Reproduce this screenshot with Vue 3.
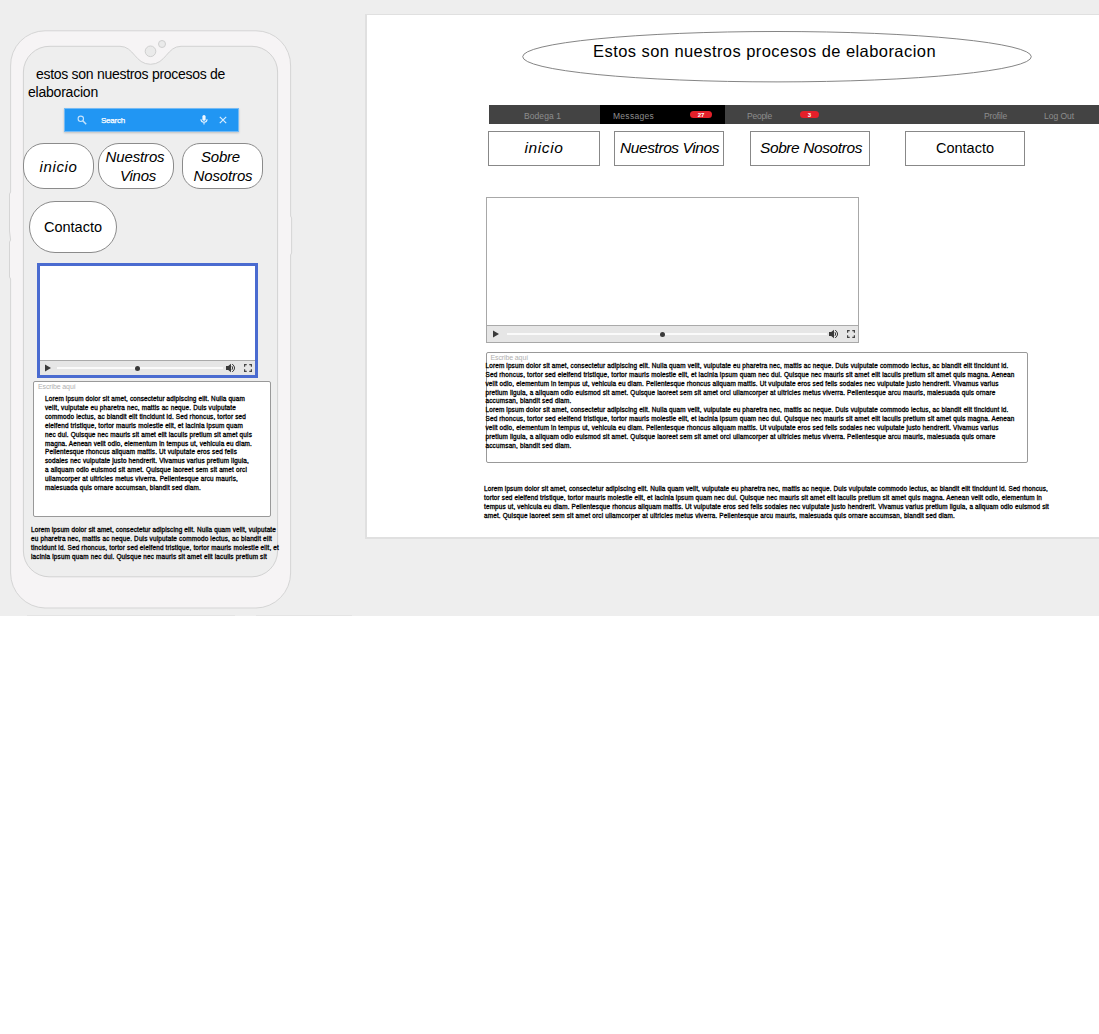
<script setup>
import { h } from 'vue'

// Spreads the letters of a line so that it takes up the given width.
const vFit = {
  mounted(el, { value }) {
    const width = el.getBoundingClientRect().width
    el.style.letterSpacing = (value - width) / el.textContent.length + 'px'
  }
}

const noteLines = [
  ['Lorem ipsum dolor sit amet, consectetur adipiscing elit. Nulla quam', 200],
  ['velit, vulputate eu pharetra nec, mattis ac neque. Duis vulputate', 191],
  ['commodo lectus, ac blandit elit tincidunt id. Sed rhoncus, tortor sed', 201],
  ['eleifend tristique, tortor mauris molestie elit, et lacinia ipsum quam', 198],
  ['nec dui. Quisque nec mauris sit amet elit iaculis pretium sit amet quis', 207],
  ['magna. Aenean velit odio, elementum in tempus ut, vehicula eu diam.', 207],
  ['Pellentesque rhoncus aliquam mattis. Ut vulputate eros sed felis', 192],
  ['sodales nec vulputate justo hendrerit. Vivamus varius pretium ligula,', 204],
  ['a aliquam odio euismod sit amet. Quisque laoreet sem sit amet orci', 202],
  ['ullamcorper at ultricies metus viverra. Pellentesque arcu mauris,', 193],
  ['malesuada quis ornare accumsan, blandit sed diam.', 156]
]

const phoneFooter = [
  ['Lorem ipsum dolor sit amet, consectetur adipiscing elit. Nulla quam velit, vulputate', 245],
  ['eu pharetra nec, mattis ac neque. Duis vulputate commodo lectus, ac blandit elit', 241],
  ['tincidunt id. Sed rhoncus, tortor sed eleifend tristique, tortor mauris molestie elit, et', 248],
  ['lacinia ipsum quam nec dui. Quisque nec mauris sit amet elit iaculis pretium sit', 236]
]

const article = [
  ['Lorem ipsum dolor sit amet, consectetur adipiscing elit. Nulla quam velit, vulputate eu pharetra nec, mattis ac neque. Duis vulputate commodo lectus, ac blandit elit tincidunt id.', 523],
  ['Sed rhoncus, tortor sed eleifend tristique, tortor mauris molestie elit, et lacinia ipsum quam nec dui. Quisque nec mauris sit amet elit iaculis pretium sit amet quis magna. Aenean', 529],
  ['velit odio, elementum in tempus ut, vehicula eu diam. Pellentesque rhoncus aliquam mattis. Ut vulputate eros sed felis sodales nec vulputate justo hendrerit. Vivamus varius', 513],
  ['pretium ligula, a aliquam odio euismod sit amet. Quisque laoreet sem sit amet orci ullamcorper at ultricies metus viverra. Pellentesque arcu mauris, malesuada quis ornare', 510],
  ['accumsan, blandit sed diam.', 86]
]
const articleLines = [...article, ...article]

const pageFooter = [
  ['Lorem ipsum dolor sit amet, consectetur adipiscing elit. Nulla quam velit, vulputate eu pharetra nec, mattis ac neque. Duis vulputate commodo lectus, ac blandit elit tincidunt id. Sed rhoncus,', 564],
  ['tortor sed eleifend tristique, tortor mauris molestie elit, et lacinia ipsum quam nec dui. Quisque nec mauris sit amet elit iaculis pretium sit amet quis magna. Aenean velit odio, elementum in', 558],
  ['tempus ut, vehicula eu diam. Pellentesque rhoncus aliquam mattis. Ut vulputate eros sed felis sodales nec vulputate justo hendrerit. Vivamus varius pretium ligula, a aliquam odio euismod sit', 565],
  ['amet. Quisque laoreet sem sit amet orci ullamcorper at ultricies metus viverra. Pellentesque arcu mauris, malesuada quis ornare accumsan, blandit sed diam.', 471]
]

const PlayIcon = () =>
  h('svg', { viewBox: '0 0 6 8', width: 6, height: 8 }, [h('path', { d: 'M0 .5 6 4 0 7.5z', fill: '#3a3a3a' })])

const SoundIcon = () =>
  h('svg', { viewBox: '0 0 10 10', width: 10, height: 10 }, [
    h('path', { d: 'M0 3h2.2L5 .7v8.6L2.2 7H0z', fill: '#3a3a3a' }),
    h('path', { d: 'M6 3.2q1.3 1.8 0 3.6M6.2 1q4.8 4 0 8', fill: 'none', stroke: '#3a3a3a', 'stroke-width': 1 })
  ])

const FullIcon = () =>
  h('svg', { viewBox: '0 0 8 8', width: 8, height: 8 }, [
    h('path', { d: 'M.6 2.7V.6h2.1M5.3.6h2.1v2.1M7.4 5.3v2.1H5.3M2.7 7.4H.6V5.3', fill: 'none', stroke: '#444', 'stroke-width': 1.2 })
  ])
</script>

<template>
  <main class="canvas">
    <section class="phone">
      <svg class="shell" width="300" height="616" viewBox="0 0 300 616">
        <path d="M45 30.8H256A34.5 34.5 0 0 1 290.6 66V216L291.6 218V253L290.6 255V573A35 35 0 0 1 256 608H45A35 35 0 0 1 10.6 573V279L9.5 277V242L10.6 240L9.5 231V194L10.6 192V66A34.5 34.5 0 0 1 45 30.8Z" fill="#f6f4f5" stroke="#d5d5d5" />
        <path d="M50 46.3H120C134 46.3 135 64.3 150.5 64.3S167 46.3 181 46.3H252A25.8 25.8 0 0 1 277.6 72V551A25.8 25.8 0 0 1 252 576.8H49A25.8 25.8 0 0 1 23.4 551V72A26 26 0 0 1 50 46.3Z" fill="#eeeeee" stroke="#d2d2d2" />
        <circle cx="150.5" cy="51.3" r="5.3" fill="#eaeaea" stroke="#cfcfcf" />
        <circle cx="162" cy="44" r="3.5" fill="#eaeaea" stroke="#cfcfcf" />
        <path d="M27 615.5H235M256 615.5H352" stroke="#e4e4e4" />
      </svg>
      <div class="screen">
        <h2 class="phone-title">
          <span class="first"><span v-fit="189">estos son nuestros procesos de</span></span>
          <span><span v-fit="70">elaboracion</span></span>
        </h2>
        <div class="search">
          <svg width="10" height="10" viewBox="0 0 10 10" fill="none" stroke="#c5e3fc"><circle cx="3.8" cy="3.8" r="2.7" stroke-width="1.1" /><path d="m5.8 5.8 3.4 3.4" stroke-width="1.5" /></svg>
          <span class="search-label"><span v-fit="24">Search</span></span>
          <svg class="mic" width="8" height="10" viewBox="0 0 8 10"><rect x="2.4" y="0" width="3.2" height="5.8" rx="1.6" fill="#f0f8ff" /><path d="M.9 4.2q.2 3 3.1 3t3.1-3M4 7v2.6" fill="none" stroke="#e2f1fe" stroke-width="1.1" /></svg>
          <svg width="8" height="8" viewBox="0 0 8 8"><path d="m.8.8 6.4 6.4m0-6.4L.8 7.2" stroke="#d9edfd" stroke-width="1.2" /></svg>
        </div>
        <nav class="pills">
          <a class="pill p1"><span v-fit="38">inicio</span></a>
          <a class="pill p2"><span v-fit="59">Nuestros</span><span v-fit="36" class="vinos">Vinos</span></a>
          <a class="pill p3"><span v-fit="39" class="sobre">Sobre</span><span v-fit="59">Nosotros</span></a>
          <a class="pill p4"><span v-fit="58">Contacto</span></a>
        </nav>
        <div class="player small">
          <div class="controls"><PlayIcon /><div class="track"><i></i></div><SoundIcon /><FullIcon class="full" /></div>
        </div>
        <div class="note">
          <div class="hint"><span v-fit="37.5">Escribe aquí</span></div>
          <p v-for="(l, i) in noteLines" :key="i" class="lorem"><span v-fit="l[1]">{{ l[0] }}</span></p>
        </div>
        <div class="phone-footer">
          <p v-for="(l, i) in phoneFooter" :key="i" class="lorem"><span v-fit="l[1]">{{ l[0] }}</span></p>
        </div>
      </div>
    </section>

    <section class="desktop">
      <h1 class="oval">
        <svg width="510" height="52" viewBox="0 0 510 52"><ellipse cx="255" cy="25.7" rx="254.3" ry="25.2" fill="#fff" stroke="#777" stroke-width=".9" /></svg>
        <span v-fit="343">Estos son nuestros procesos de elaboracion</span>
      </h1>
      <div class="menu">
        <div class="tab t1"><span v-fit="37">Bodega 1</span></div>
        <div class="tab t2"><span v-fit="41">Messages</span><b>27</b></div>
        <div class="tab t3"><span v-fit="25">People</span><b>3</b></div>
        <div class="tab t4"><span v-fit="23">Profile</span></div>
        <div class="tab t5"><span v-fit="30">Log Out</span></div>
      </div>
      <nav class="links">
        <a class="link l1"><span v-fit="39">inicio</span></a>
        <a class="link l2"><span v-fit="99">Nuestros Vinos</span></a>
        <a class="link l3"><span v-fit="102">Sobre Nosotros</span></a>
        <a class="link l4"><span v-fit="58">Contacto</span></a>
      </nav>
      <div class="player large">
        <div class="controls"><PlayIcon /><div class="track"><i></i></div><SoundIcon /><FullIcon class="full" /></div>
      </div>
      <div class="article">
        <div class="hint"><span v-fit="37.5">Escribe aquí</span></div>
        <p v-for="(l, i) in articleLines" :key="i" class="lorem"><span v-fit="l[1]">{{ l[0] }}</span></p>
      </div>
      <div class="page-footer">
        <p v-for="(l, i) in pageFooter" :key="i" class="lorem"><span v-fit="l[1]">{{ l[0] }}</span></p>
      </div>
    </section>
  </main>
</template>

<style>
body { margin: 0; background: #fff; }
</style>

<style scoped>
* { box-sizing: border-box; }
.canvas {
  display: flex;
  width: 1099px;
  height: 616px;
  overflow: hidden;
  background: #eee;
  color: #000;
  font-family: "Liberation Sans", Arial, sans-serif;
}
span { white-space: nowrap; }
svg { display: block; flex: none; }
h1, h2, p { margin: 0; font-weight: 400; }

.phone { position: relative; width: 365px; flex: none; }
.shell { position: absolute; left: 0; top: 0; overflow: visible; }
.screen { position: relative; padding: 65px 0 0 23px; display: flex; flex-direction: column; align-items: flex-start; }
.phone-title { font-size: 14px; line-height: 18px; padding-left: 5px; height: 43px; }
.phone-title > span { display: block; }
.phone-title .first { padding-left: 8px; }
.search {
  display: flex;
  align-items: center;
  width: 175px;
  height: 24px;
  margin-left: 41px;
  padding: 0 11px 0 12px;
  border: 1px solid #75bbf5;
  background: #2196f3;
  box-shadow: 0 1px 2px rgba(0, 0, 0, .2);
}
.search-label { margin-left: 14px; flex: 1; color: #fff; font-size: 8px; -webkit-text-stroke: .25px #fff; }
.mic { margin-right: 11px; }

.pills { display: flex; flex-wrap: wrap; margin-top: 11px; width: 250px; font-size: 15px; line-height: 19px; }
.pill {
  display: flex;
  flex-direction: column;
  align-items: center;
  justify-content: center;
  height: 46px;
  border: 1px solid #8b8b8b;
  border-radius: 21px;
  background: #fff;
  font-style: italic;
}
.p1 { width: 71px; }
.p2 { width: 76px; margin-left: 4px; padding-right: 2px; }
.vinos { margin-left: 6px; }
.p3 { width: 81px; margin-left: 8px; border-radius: 18px; }
.sobre { margin-right: 4px; }
.p3 span:last-child { margin-left: 1px; }
.p4 { width: 88px; height: 52px; margin: 12px 0 0 6px; border-radius: 26px; font-style: normal; font-size: 14.5px; }

.player { display: flex; flex-direction: column; justify-content: flex-end; background: #fff; }
.controls { display: flex; align-items: center; background: #e6e6e6; border-top: 1px solid #aaa; }
.track { height: 2px; background: #fafafa; position: relative; }
.track i { position: absolute; top: -1.5px; width: 5px; height: 5px; border-radius: 50%; background: #3a3a3a; }
.small { width: 221px; height: 115px; margin: 10px 0 0 14px; border: 3px solid #4a6bd0; }
.small .controls { height: 15px; padding-left: 5px; }
.small .track { width: 166px; margin: 0 3px 0 6px; }
.small .track i { left: 78px; }
.small .full { margin-left: 8px; }
.large { width: 373px; height: 146px; margin: 31px 0 0 119px; border: 1px solid #a8a8a8; }
.large .controls { height: 17px; padding-left: 6px; }
.large .track { width: 320px; margin: 0 2px 0 8px; }
.large .track i { left: 153px; }
.large .full { margin-left: 8px; }

.hint { color: #b0b0b0; font-size: 7px; line-height: 8px; padding-left: 4px; }
.lorem { font-size: 6.4px; height: 8.85px; line-height: 8.85px; -webkit-text-stroke: .3px #000; }
.note { width: 238px; height: 136px; margin: 3px 0 0 10px; border: 1px solid #999; border-radius: 2px; background: #fff; padding-top: 1px; }
.note .hint { height: 12.4px; }
.note .lorem { padding-left: 11px; }
.phone-footer { margin: 8px 0 0 8px; }
.phone-footer .lorem, .page-footer .lorem { height: 9px; line-height: 9px; }

.desktop { flex: none; width: 740px; height: 525px; margin-top: 14px; border: 2px solid #e0e0e0; border-top-width: 1px; background: #fff; }
.oval { position: relative; width: 510px; height: 52px; margin: 16px 0 0 155px; font-size: 16.5px; line-height: 41px; }
.oval svg { position: absolute; left: 0; top: 0; }
.oval span { position: relative; margin-left: 71px; }
.menu { display: flex; height: 19px; margin: 22px 0 0 122px; background: #434343; color: #8e8e8e; font-size: 8.5px; line-height: 22px; }
.tab { display: flex; flex: none; }
.tab b { width: 22px; height: 7px; margin-top: 6px; border-radius: 4px; background: #e4202a; color: #fff; font-size: 6px; line-height: 8px; text-align: center; }
.t1 { width: 111px; padding-left: 35px; }
.t2 { width: 125px; padding-left: 13px; background: #000; }
.t2 b { margin-left: 36px; }
.t3 { width: 238px; padding-left: 22px; }
.t3 b { width: 19px; margin-left: 28px; }
.t4 { width: 60px; padding-left: 21px; }
.t5 { width: 60px; padding-left: 21px; }
.links { display: flex; margin: 7px 0 0 121px; font-size: 15.5px; font-style: italic; }
.link { display: flex; justify-content: center; align-items: center; height: 35px; border: 1px solid #888; padding-bottom: 2px; }
.l1 { width: 112px; }
.l2 { width: 110px; margin-left: 14px; padding-left: 1px; }
.l3 { width: 120px; margin-left: 26px; padding-left: 2px; }
.l4 { width: 120px; margin-left: 35px; font-style: normal; font-size: 14.5px; }
.article { width: 542px; height: 111px; margin: 9px 0 0 118.5px; border: 1px solid #999; border-radius: 2px; background: #fff; padding-top: 1px; }
.article .hint { height: 8px; }
.article .lorem { margin-left: -1px; }
.page-footer { margin: 21px 0 0 117px; }
</style>
